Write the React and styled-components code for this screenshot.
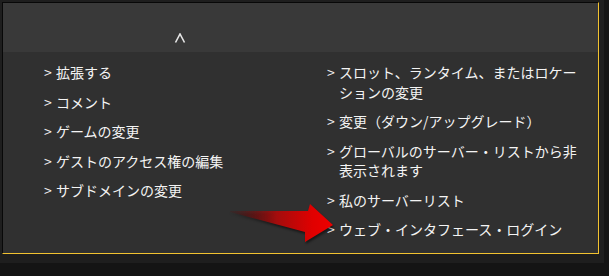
import React from "react";
import styled, { createGlobalStyle } from "styled-components";

const GlobalStyle = createGlobalStyle`
  html, body {
    margin: 0;
    background: #141414;
  }
`;

const Screen = styled.div`
  position: relative;
  width: 609px;
  height: 276px;
  background: #141414;
  overflow: hidden;
`;

const Shell = styled.div`
  width: 604px;
  height: 263px;
  background: #1e1e1e;
  padding: 2px 0 0 2px;
  box-sizing: border-box;
`;

const Panel = styled.div`
  width: 597px;
  height: 252px;
  box-sizing: border-box;
  border-top: 1px solid #080808;
  border-left: 1px solid #080808;
  border-right: 1px solid #f2c230;
  border-bottom: 1px solid #f2c230;
  display: flex;
  flex-direction: column;
`;

const Header = styled.div`
  height: 49px;
  background: #393939;
  display: flex;
  align-items: flex-end;
  padding: 0 0 9px 171px;
  box-sizing: border-box;
`;

const Content = styled.div`
  flex: 1;
  background: #303030;
  display: grid;
  grid-template-columns: 283px 1fr;
  padding: 11px 0 0 41px;
  font-family: "Noto Sans CJK JP", "Noto Sans", sans-serif;
  font-size: 14px;
  line-height: 19.5px;
  color: #f4f4f4;
`;

const List = styled.ul`
  list-style: none;
  margin: 0;
  padding: 0;
  display: flex;
  flex-direction: column;
  gap: 10px;
`;

const Item = styled.li`
  display: flex;
  align-items: flex-start;
`;

const Marker = styled.span`
  flex: none;
  width: 12px;
`;

const Label = styled.span`
  width: ${(p) => p.$width || "auto"};
`;

const ArrowSvg = styled.svg`
  position: absolute;
  left: 226px;
  top: 199px;
  filter: drop-shadow(1px 2px 1px rgba(0, 0, 0, 0.5));
`;

const leftItems = [
  "拡張する",
  "コメント",
  "ゲームの変更",
  "ゲストのアクセス権の編集",
  "サブドメインの変更",
];

const rightItems = [
  "スロット、ランタイム、またはロケーションの変更",
  "変更（ダウン/アップグレード）",
  "グローバルのサーバー・リストから非表示されます",
  "私のサーバーリスト",
  "ウェブ・インタフェース・ログイン",
];

const Caret = () => (
  <svg width="12" height="10" viewBox="0 0 12 10">
    <polyline
      points="1.5,9.5 6,1 10.5,9.5"
      fill="none"
      stroke="#e6e6e6"
      strokeWidth="1.6"
    />
  </svg>
);

const Arrow = () => (
  <ArrowSvg width="112" height="50" viewBox="0 0 112 50">
    <defs>
      <linearGradient id="arrowFill" x1="0" y1="0" x2="1" y2="0">
        <stop offset="0" stopColor="#5a0a0a" stopOpacity="0.15" />
        <stop offset="0.45" stopColor="#a30d0d" />
        <stop offset="0.8" stopColor="#e00000" />
        <stop offset="1" stopColor="#ee0000" />
      </linearGradient>
    </defs>
    <polygon
      points="4,12 82,12 84,5 107,26 79,43 79,33 4,13"
      fill="url(#arrowFill)"
    />
  </ArrowSvg>
);

export default function App() {
  return (
    <Screen>
      <GlobalStyle />
      <Shell>
        <Panel>
          <Header>
            <Caret />
          </Header>
          <Content>
            <List>
              {leftItems.map((t) => (
                <Item key={t}>
                  <Marker>&gt;</Marker>
                  <Label>{t}</Label>
                </Item>
              ))}
            </List>
            <List>
              {rightItems.map((t) => (
                <Item key={t}>
                  <Marker>&gt;</Marker>
                  <Label $width="242px">{t}</Label>
                </Item>
              ))}
            </List>
          </Content>
        </Panel>
      </Shell>
      <Arrow />
    </Screen>
  );
}
